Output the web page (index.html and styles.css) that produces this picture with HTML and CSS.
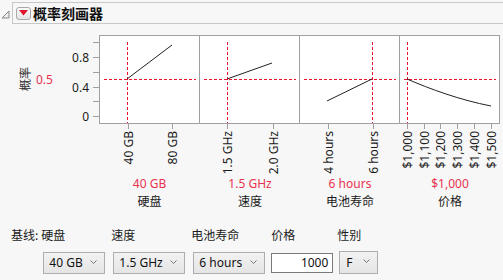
FILE: index.html
```html
<!DOCTYPE html>
<html lang="zh">
<head>
<meta charset="utf-8">
<link rel="stylesheet" href="styles.css">
</head>
<body>
<div class="header">
  <svg class="collapse" width="12" height="12" viewBox="0 0 12 12"><polygon points="2,10 9,10 9,3" fill="#eee" stroke="#888" stroke-width="1"/></svg>
  <div class="titlebar">
    <span class="menu-btn"><svg width="9" height="6" viewBox="0 0 9 6"><polygon points="0,0 9,0 4.5,5.5" fill="#e0162b"/></svg></span>
    <span class="title">概率刻画器</span>
  </div>
</div>

<div class="chart">
  <svg class="yaxis" width="99" height="89" viewBox="0 0 99 89">
    <text class="ytitle" transform="translate(24,44) rotate(-90)" text-anchor="middle" dominant-baseline="central">概率</text>
    <text class="red" x="36" y="44" dominant-baseline="central">0.5</text>
    <g class="axis-lines">
      <line x1="93" y1="7.5" x2="99" y2="7.5"/>
      <line x1="93" y1="22.5" x2="99" y2="22.5"/>
      <line x1="93" y1="37.5" x2="99" y2="37.5"/>
      <line x1="93" y1="52.5" x2="99" y2="52.5"/>
      <line x1="93" y1="66.5" x2="99" y2="66.5"/>
      <line x1="93" y1="81.5" x2="99" y2="81.5"/>
    </g>
    <text x="89" y="22.5" text-anchor="end" dominant-baseline="central">0.8</text>
    <text x="89" y="52.5" text-anchor="end" dominant-baseline="central">0.4</text>
    <text x="89" y="81.5" text-anchor="end" dominant-baseline="central">0</text>
  </svg>

  <div class="panel first">
    <svg width="99" height="87" viewBox="0 0 99 87">
      <line class="ref" x1="27.5" y1="6" x2="27.5" y2="87"/>
      <line class="ref" x1="4" y1="43.5" x2="96" y2="43.5"/>
      <line class="curve" x1="27" y1="43" x2="72" y2="9"/>
    </svg>
  </div>
  <div class="panel">
    <svg width="99" height="87" viewBox="0 0 99 87">
      <line class="ref" x1="27.5" y1="6" x2="27.5" y2="87"/>
      <line class="ref" x1="4" y1="43.5" x2="96" y2="43.5"/>
      <line class="curve" x1="27" y1="43" x2="72" y2="27"/>
    </svg>
  </div>
  <div class="panel">
    <svg width="99" height="87" viewBox="0 0 99 87">
      <line class="ref" x1="72.5" y1="6" x2="72.5" y2="87"/>
      <line class="ref" x1="4" y1="43.5" x2="96" y2="43.5"/>
      <line class="curve" x1="27" y1="65" x2="72" y2="43"/>
    </svg>
  </div>
  <div class="panel">
    <svg width="99" height="87" viewBox="0 0 99 87">
      <line class="ref" x1="7.5" y1="6" x2="7.5" y2="87"/>
      <line class="ref" x1="4" y1="43.5" x2="96" y2="43.5"/>
      <path class="curve" d="M7,43 C30,53 60,64 91,70"/>
    </svg>
  </div>

  <div class="xspacer"></div>
  <svg class="xticks" width="101" height="52" viewBox="0 0 101 52">
    <g class="axis-lines"><line x1="29.5" y1="0" x2="29.5" y2="5"/><line x1="73.5" y1="0" x2="73.5" y2="5"/></g>
    <text transform="translate(29.5,7) rotate(-90)" text-anchor="end" dominant-baseline="central">40 GB</text>
    <text transform="translate(73.5,7) rotate(-90)" text-anchor="end" dominant-baseline="central">80 GB</text>
  </svg>
  <svg class="xticks" width="100" height="52" viewBox="0 0 100 52">
    <g class="axis-lines"><line x1="27.5" y1="0" x2="27.5" y2="5"/><line x1="73.5" y1="0" x2="73.5" y2="5"/></g>
    <text transform="translate(27.5,7) rotate(-90)" text-anchor="end" dominant-baseline="central">1.5 GHz</text>
    <text transform="translate(73.5,7) rotate(-90)" text-anchor="end" dominant-baseline="central">2.0 GHz</text>
  </svg>
  <svg class="xticks" width="100" height="52" viewBox="0 0 100 52">
    <g class="axis-lines"><line x1="28.5" y1="0" x2="28.5" y2="5"/><line x1="73.5" y1="0" x2="73.5" y2="5"/></g>
    <text transform="translate(28.5,7) rotate(-90)" text-anchor="end" dominant-baseline="central">4 hours</text>
    <text transform="translate(73.5,7) rotate(-90)" text-anchor="end" dominant-baseline="central">6 hours</text>
  </svg>
  <svg class="xticks" width="100" height="52" viewBox="0 0 100 52">
    <g class="axis-lines">
      <line x1="7.5" y1="0" x2="7.5" y2="5"/><line x1="24.5" y1="0" x2="24.5" y2="5"/><line x1="40.5" y1="0" x2="40.5" y2="5"/>
      <line x1="57.5" y1="0" x2="57.5" y2="5"/><line x1="74.5" y1="0" x2="74.5" y2="5"/><line x1="91.5" y1="0" x2="91.5" y2="5"/>
    </g>
    <text transform="translate(7.5,7) rotate(-90)" text-anchor="end" dominant-baseline="central">$1,000</text>
    <text transform="translate(24.5,7) rotate(-90)" text-anchor="end" dominant-baseline="central">$1,100</text>
    <text transform="translate(40.5,7) rotate(-90)" text-anchor="end" dominant-baseline="central">$1,200</text>
    <text transform="translate(57.5,7) rotate(-90)" text-anchor="end" dominant-baseline="central">$1,300</text>
    <text transform="translate(74.5,7) rotate(-90)" text-anchor="end" dominant-baseline="central">$1,400</text>
    <text transform="translate(91.5,7) rotate(-90)" text-anchor="end" dominant-baseline="central">$1,500</text>
  </svg>

  <div class="xspacer"></div>
  <div class="value">40 GB</div>
  <div class="value">1.5 GHz</div>
  <div class="value">6 hours</div>
  <div class="value">$1,000</div>

  <div class="xspacer"></div>
  <div class="name">硬盘</div>
  <div class="name">速度</div>
  <div class="name">电池寿命</div>
  <div class="name">价格</div>
</div>

<div class="baseline">
  <div class="field lead"><span class="label">基线:</span></div>
  <div class="field">
    <span class="label">硬盘</span>
    <span class="select w62">40 GB<svg class="chev" width="7" height="4" viewBox="0 0 7 4"><polyline points="0.5,0.5 3.5,3.5 6.5,0.5" fill="none" stroke="#777"/></svg></span>
  </div>
  <div class="field">
    <span class="label">速度</span>
    <span class="select w72">1.5 GHz<svg class="chev" width="7" height="4" viewBox="0 0 7 4"><polyline points="0.5,0.5 3.5,3.5 6.5,0.5" fill="none" stroke="#777"/></svg></span>
  </div>
  <div class="field">
    <span class="label">电池寿命</span>
    <span class="select w72">6 hours<svg class="chev" width="7" height="4" viewBox="0 0 7 4"><polyline points="0.5,0.5 3.5,3.5 6.5,0.5" fill="none" stroke="#777"/></svg></span>
  </div>
  <div class="field tight">
    <span class="label">价格</span>
    <span class="input">1000</span>
  </div>
  <div class="field">
    <span class="label">性别</span>
    <span class="select w39 tall">F<svg class="chev" width="7" height="4" viewBox="0 0 7 4"><polyline points="0.5,0.5 3.5,3.5 6.5,0.5" fill="none" stroke="#777"/></svg></span>
  </div>
</div>
</body>
</html>
```

FILE: styles.css
```css
* { box-sizing: border-box; }

body {
  margin: 0;
  background: #f7f7f7;
  font-family: "Noto Sans", "Noto Sans CJK SC", sans-serif;
  font-size: 12px;
  color: #1a1a1a;
  width: 503px;
  height: 280px;
  overflow: hidden;
}

.header {
  display: flex;
  align-items: center;
  padding-top: 2px;
}

.collapse {
  width: 12px;
  height: 12px;
  margin-top: 2px;
}

.titlebar {
  flex: 1;
  height: 22px;
  border: 1px solid #c8c8c8;
  border-right: none;
  display: flex;
  align-items: center;
  padding-left: 3px;
}

.menu-btn {
  width: 15px;
  height: 13px;
  border: 1px solid #a8a8a8;
  border-radius: 3px;
  background: linear-gradient(#fbfbfb, #e4e4e4);
  display: flex;
  align-items: center;
  justify-content: center;
}

.title {
  font-family: "Noto Sans CJK SC", sans-serif;
  font-weight: bold;
  font-size: 14px;
  margin-left: 2px;
  color: #111;
  line-height: 20px;
}

.chart {
  display: grid;
  grid-template-columns: 99px 101px 100px 100px 100px;
  grid-template-rows: 89px 52px 16px 18px;
  margin-top: 11px;
}

.yaxis text, .xticks text {
  font-family: "Noto Sans", sans-serif;
  font-size: 12px;
  fill: #1a1a1a;
}

.yaxis .ytitle {
  font-family: "Noto Sans CJK SC", sans-serif;
  fill: #333;
}

.yaxis .red { fill: #e8334f; }

.axis-lines line {
  stroke: #a0a0a0;
  stroke-width: 1;
}

.panel {
  background: #fff;
  border-top: 1px solid #a0a0a0;
  border-bottom: 1px solid #a0a0a0;
  border-right: 1px solid #a0a0a0;
}

.panel.first { border-left: 1px solid #a0a0a0; }

.panel svg { display: block; }

.panel .ref {
  stroke: #f0102e;
  stroke-width: 1;
  stroke-dasharray: 3 2;
  fill: none;
  shape-rendering: crispEdges;
}

.panel .curve {
  stroke: #222;
  stroke-width: 1;
  fill: none;
}

.xticks { display: block; }

.value {
  color: #e8334f;
  text-align: center;
  line-height: 16px;
}

.name {
  text-align: center;
  line-height: 18px;
  font-family: "Noto Sans CJK SC", sans-serif;
}

.baseline {
  display: flex;
  align-items: flex-start;
  margin-top: 17px;
  padding-left: 11px;
}

.field {
  display: flex;
  flex-direction: column;
  align-items: flex-start;
  margin-right: 6px;
}

.field.lead { margin-right: 3px; }
.field.tight { margin-right: 4px; }

.label {
  line-height: 16px;
  height: 16px;
  font-family: "Noto Sans CJK SC", sans-serif;
}

.select {
  margin-top: 9px;
  margin-left: 2px;
  height: 22px;
  border: 1px solid #adadad;
  background: linear-gradient(#f2f2f2, #e5e5e5);
  display: flex;
  align-items: center;
  justify-content: space-between;
  padding: 0 7px 1px 5px;
  color: #111;
}

.select .chev { margin-top: -2px; }

.w62 { width: 62px; }
.w72 { width: 72px; }
.w39 { width: 39px; padding-left: 6px; }
.select.tall { height: 23px; margin-top: 8px; }

.input {
  margin-top: 10px;
  width: 62px;
  height: 20px;
  border: 1px solid #7a7a7a;
  background: #fff;
  text-align: right;
  padding-right: 4px;
  line-height: 17px;
  color: #111;
}
```
